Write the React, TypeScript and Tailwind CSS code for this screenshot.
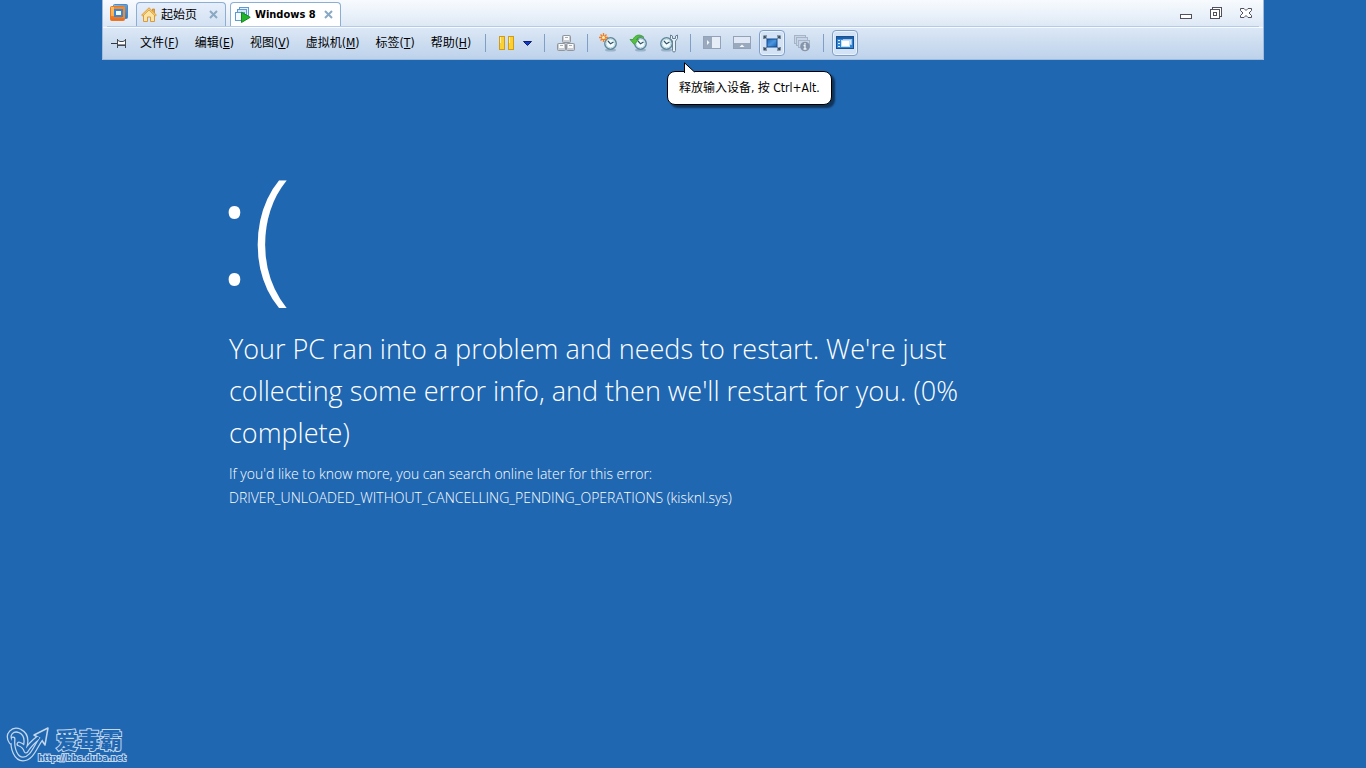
import type { ReactNode } from 'react'

const menus = [
  ['文件', 'F'],
  ['编辑', 'E'],
  ['视图', 'V'],
  ['虚拟机', 'M'],
  ['标签', 'T'],
  ['帮助', 'H'],
] as const

function ToolButton({ label, active, children }: { label: string; active?: boolean; children: ReactNode }) {
  return (
    <button
      type="button"
      aria-label={label}
      className={
        active
          ? 'flex h-[26px] w-[26px] items-center justify-center rounded-sm border border-[#7f9fca] bg-[#d3e2f5] shadow-[inset_0_0_0_1px_#eaf2fb]'
          : 'flex h-[26px] w-[26px] items-center justify-center'
      }
    >
      {children}
    </button>
  )
}

function Separator() {
  return <div className="mx-1 h-[18px] w-px bg-[#7f9fc6]" />
}

function LogoIcon() {
  return (
    <svg width="20" height="20" viewBox="0 0 20 20">
      <defs>
        <linearGradient id="logo-orange" x1="0" y1="0" x2="0" y2="1">
          <stop offset="0" stopColor="#fdb245" />
          <stop offset="1" stopColor="#ec6a1c" />
        </linearGradient>
        <linearGradient id="logo-blue" x1="0" y1="0" x2="1" y2="1">
          <stop offset="0" stopColor="#8fc0ea" />
          <stop offset="1" stopColor="#2f78bf" />
        </linearGradient>
      </defs>
      <rect x="4.500" y="1.500" width="14" height="14" rx="1" fill="url(#logo-blue)" stroke="#4d89c4" />
      <rect x="1.500" y="3.500" width="14" height="14" rx="1" fill="url(#logo-orange)" stroke="#e27a2c" />
      <path d="M5 4h11v11h-3V7H5z" fill="#f58a2a" />
      <rect x="5" y="6" width="9" height="8" fill="#3b86d0" />
      <rect x="7" y="8" width="5" height="4" fill="#f4f9ff" />
      <path d="M2 4h3v9H2z" fill="#ffcb70" opacity=".6" />
    </svg>
  )
}

function HomeIcon() {
  return (
    <svg width="16" height="16" viewBox="0 0 16 16">
      <path d="M11.500 2h2v4h-2z" fill="#e9a93f" stroke="#c07c20" strokeWidth=".7" />
      <path d="M2.500 8v6.500h4V10h3v4.500h4V8L8 2.800z" fill="#fbe3a3" stroke="#d89a3a" />
      <path d="M.8 8.800 8 1.600l7.200 7.200" fill="none" stroke="#e0a23e" strokeWidth="2" />
      <path d="M1.500 8.200 8 1.800l6.500 6.400" fill="none" stroke="#fbd78a" strokeWidth=".9" />
    </svg>
  )
}

function RunningIcon() {
  return (
    <svg width="16" height="16" viewBox="0 0 16 16">
      <rect x="4.500" y=".5" width="9" height="8" fill="#e2f0fb" stroke="#5e9bd2" />
      <rect x="2.500" y="2.500" width="9" height="8" fill="#d2e8fa" stroke="#5e9bd2" />
      <rect x=".5" y="5.500" width="9" height="8" fill="#f4faff" stroke="#5e9bd2" />
      <path d="M6.500 5.200v10.300l8.700-5.200z" fill="#22b52a" stroke="#128a1a" />
    </svg>
  )
}

function CloseIcon() {
  return (
    <svg width="9" height="9" viewBox="0 0 9 9">
      <path d="m1 1 7 7M8 1 1 8" stroke="#8aa9c4" strokeWidth="2" />
    </svg>
  )
}

function PinIcon() {
  return (
    <svg width="18" height="12" viewBox="0 0 18 12">
      <path d="M1 6.500h6" stroke="#33373d" />
      <rect x="8" y="4" width="7" height="4" fill="#fff" />
      <path d="M7.500 2v9M15.500 2v9M8 3.500l2 1h3l2-1M8 8.500h7" fill="none" stroke="#44484f" />
      <path d="M8 7.500h7" stroke="#8d9197" />
    </svg>
  )
}

function KeysIcon() {
  return (
    <svg width="20" height="18" viewBox="0 0 20 18">
      {[[6, 1], [1, 9], [10, 9]].map(([x, y]) => (
        <g key={`${x}-${y}`}>
          <rect x={x + 0.5} y={y + 0.5} width="8" height="7" rx="1" fill="#c9ccd0" stroke="#92969c" />
          <rect x={x + 2} y={y + 1} width="5" height="4" fill="#f9fafa" />
          <path d={`M${x + 3} ${y + 2.5}h3`} stroke="#a9adb2" />
        </g>
      ))}
    </svg>
  )
}

function Clock({ x = 5 }: { x?: number }) {
  return (
    <g transform={`translate(${x} 4)`}>
      <ellipse cx="6.500" cy="13" rx="5.500" ry="1.500" fill="#7d99b4" opacity=".6" />
      <circle cx="6.500" cy="6.500" r="5.700" fill="#f2fafd" stroke="#5f8799" strokeWidth="1.500" />
      <circle cx="6.500" cy="6.500" r="4.300" fill="none" stroke="#b4d8e4" />
      <path d="m4 4 2.500 2.800L9.500 5" fill="none" stroke="#2f5268" strokeWidth="1.200" />
    </g>
  )
}

function TakeSnapshotIcon() {
  return (
    <svg width="20" height="20" viewBox="0 0 20 20">
      <Clock />
      <path d="M4.500 0v9M0 4.500h9M1.500 1.500l6 6M7.500 1.500l-6 6" stroke="#ef7d22" strokeWidth="1.300" />
      <circle cx="4.500" cy="4.500" r="1.500" fill="#fff2b8" />
    </svg>
  )
}

function RevertIcon() {
  return (
    <svg width="20" height="20" viewBox="0 0 20 20">
      <Clock />
      <path
        d="M15 4.500C11.500 .5 6 1.500 4 6.500H1l4.300 5L9.500 6.500H7.500C9 3.800 12 3 15 4.500z"
        fill="#56c140"
        stroke="#2d9128"
        strokeWidth=".7"
      />
    </svg>
  )
}

function ManageIcon() {
  return (
    <svg width="20" height="20" viewBox="0 0 20 20">
      <Clock x={1} />
      <path
        d="M11.500 2v3.500L13.500 8v9.500a1.500 1.500 0 0 0 3 0V8l2-2.500V2l-2 1v2.500h-3V3z"
        fill="#eaf1f6"
        stroke="#668299"
      />
    </svg>
  )
}

function SidebarIcon() {
  return (
    <svg width="18" height="14" viewBox="0 0 18 14">
      <rect x=".5" y=".5" width="17" height="12" fill="#e6edf6" stroke="#93a2b8" />
      <path d="M1 1h8v11H1z" fill="#9aa9be" />
      <path d="M4 4v5l2.500-2.500z" fill="#f3f6fa" />
    </svg>
  )
}

function ThumbnailIcon() {
  return (
    <svg width="18" height="14" viewBox="0 0 18 14">
      <rect x=".5" y=".5" width="17" height="12" fill="#dfe8f4" stroke="#93a2b8" />
      <path d="M1 7h16v5H1z" fill="#9aa9be" />
      <path d="M6.500 11h5L9 8.500z" fill="#f3f6fa" />
    </svg>
  )
}

function FullscreenIcon() {
  return (
    <svg width="18" height="16" viewBox="0 0 18 16" className="shrink-0">
      <defs>
        <linearGradient id="screen" x1="0" y1="0" x2="1" y2="1">
          <stop offset="0" stopColor="#1d62b7" />
          <stop offset=".5" stopColor="#4b97de" />
          <stop offset="1" stopColor="#1a5cad" />
        </linearGradient>
      </defs>
      <rect x="4" y="4" width="10" height="8" fill="url(#screen)" stroke="#164a8d" />
      <path
        d="M1 4V1h3M14 1h3v3M17 12v3h-3M4 15H1v-3M1 1l2.500 2.500M17 1l-2.500 2.500M17 15l-2.500-2.500M1 15l2.500-2.500"
        fill="none"
        stroke="#3e4f63"
        strokeWidth="1.200"
      />
    </svg>
  )
}

function UnityIcon() {
  return (
    <svg width="18" height="18" viewBox="0 0 18 18">
      <g fill="#c8d5e6" stroke="#a5b4c8">
        <rect x="1.500" y="1.500" width="11" height="8" />
        <rect x="3.500" y="3.500" width="11" height="8" />
        <rect x="5.500" y="6.500" width="11" height="7" />
      </g>
      <circle cx="12" cy="12.500" r="4.800" fill="#8595ab" />
      <path d="M12 9v1.500M10.500 11.500H12V15m-1.500 0h3" fill="none" stroke="#edf2f7" strokeWidth="1.300" />
    </svg>
  )
}

function ConsoleIcon() {
  return (
    <svg width="20" height="16" viewBox="0 0 20 16" className="shrink-0">
      <rect x="1.500" y="1.500" width="17" height="12" fill="#2e86d6" stroke="#184f91" />
      <path d="M2 2h16v2H2z" fill="#1e5faa" />
      <path d="M3 5.500h2M3 8.500h2M3 11.500h2" stroke="#dceeff" />
      <rect x="8.500" y="4.500" width="8" height="5" fill="#d5e9fb" stroke="#9cc8ef" />
      <rect x="6.500" y="5.500" width="8" height="6" fill="#fff" stroke="#c8e1f7" />
    </svg>
  )
}

function WindowButtons() {
  return (
    <div className="ml-auto flex items-center gap-1">
      <ToolButton label="最小化">
        <svg width="14" height="14" viewBox="0 0 14 14">
          <rect x="1.500" y="8.500" width="11" height="4" fill="#fff" stroke="#50505f" />
        </svg>
      </ToolButton>
      <ToolButton label="还原">
        <svg width="14" height="14" viewBox="0 0 14 14">
          <rect x="3.500" y="1.500" width="9" height="9" fill="#fff" stroke="#50505f" />
          <rect x="1.500" y="3.500" width="9" height="9" fill="#fff" stroke="#50505f" />
          <rect x="4.500" y="6.500" width="3" height="3" fill="#fff" stroke="#50505f" />
        </svg>
      </ToolButton>
      <ToolButton label="关闭">
        <svg width="14" height="14" viewBox="0 0 14 14">
          <path
            d="M1.500 2.500h3.500l2 2 2-2h3.500v2L10 7l2.500 2.500v2H9l-2-2-2 2H1.500v-2L4 7 1.500 4.500z"
            fill="#fff"
            stroke="#50505f"
          />
        </svg>
      </ToolButton>
    </div>
  )
}

function ReleaseHint() {
  return (
    <div
      role="tooltip"
      className="absolute top-[71px] left-[564px] rounded-lg border border-black bg-white px-[11px] py-2 text-xs leading-4 whitespace-nowrap text-black shadow-[3px_3px_2px_rgba(0,0,0,0.5)]"
    >
      <svg className="absolute -top-[10px] left-4" width="12" height="11" viewBox="0 0 12 11">
        <path d="M.5 11V.8L10.500 10" fill="#fff" stroke="#000" />
        <path d="M1 10h8v1H1z" fill="#fff" />
      </svg>
      释放输入设备, 按 Ctrl+Alt.
    </div>
  )
}

function VmToolbar() {
  return (
    <header className="relative mx-[102px] border-x border-b border-[#9fbcdf] bg-linear-to-b from-[#f8fbfe] to-[#bdd2eb] font-['DejaVu_Sans_Condensed','Open_Sans','Noto_Sans_CJK_SC',sans-serif] text-xs text-black">
      <div className="mx-1 flex h-[27px] items-center border-b border-[#b3cbe8]">
        <div className="flex w-[29px] items-center pl-[2px]">
          <LogoIcon />
        </div>
        <div className="flex items-end gap-1 self-end">
          <div className="flex h-6 w-[90px] items-center rounded-t-sm border border-b-0 border-[#8caed3] bg-linear-to-b from-[#e6eefa] to-[#d3e1f3] pr-[7px] pl-1">
            <HomeIcon />
            <button type="button" className="ml-1">起始页</button>
            <button type="button" aria-label="关闭 起始页" className="ml-auto"><CloseIcon /></button>
          </div>
          <div className="flex h-6 w-[111px] items-center rounded-t-sm border border-b-0 border-[#8caed3] bg-white pr-[7px] pl-1">
            <RunningIcon />
            <button type="button" className="ml-1 pt-0.5 text-[11px] font-bold">Windows 8</button>
            <button type="button" aria-label="关闭 Windows 8" className="ml-auto"><CloseIcon /></button>
          </div>
        </div>
        <WindowButtons />
      </div>

      <div className="flex h-8 items-center gap-1 border-t border-white/80 pb-px pl-[3px]">
        <div className="-mr-0.5 flex items-center">
          <ToolButton label="固定工具栏"><PinIcon /></ToolButton>
          {menus.map(([name, key]) => (
            <button key={key} type="button" className="px-2 whitespace-nowrap">
              {name}(<u>{key}</u>)
            </button>
          ))}
        </div>
        <Separator />
        <button type="button" aria-label="挂起" className="flex h-[26px] w-[42px] items-center gap-2 pl-[5px]">
          <svg width="16" height="16" viewBox="0 0 16 16">
            <rect x=".5" y="1.500" width="5" height="13" fill="#fbd032" stroke="#d09a1c" />
            <rect x="9.500" y="1.500" width="5" height="13" fill="#fbd032" stroke="#d09a1c" />
            <path d="M1.500 2v6M10.500 2v6" stroke="#fff0a8" />
          </svg>
          <svg width="9" height="5" viewBox="0 0 9 5">
            <path d="M.5.5h8l-4 4z" fill="#1238c8" stroke="#0c2173" />
          </svg>
        </button>
        <Separator />
        <ToolButton label="发送 Ctrl+Alt+Del"><KeysIcon /></ToolButton>
        <Separator />
        <ToolButton label="拍摄快照"><TakeSnapshotIcon /></ToolButton>
        <ToolButton label="恢复快照"><RevertIcon /></ToolButton>
        <ToolButton label="管理快照"><ManageIcon /></ToolButton>
        <Separator />
        <ToolButton label="侧栏"><SidebarIcon /></ToolButton>
        <ToolButton label="缩略图栏"><ThumbnailIcon /></ToolButton>
        <ToolButton label="全屏" active><FullscreenIcon /></ToolButton>
        <ToolButton label="Unity"><UnityIcon /></ToolButton>
        <Separator />
        <ToolButton label="控制台视图" active><ConsoleIcon /></ToolButton>
      </div>
      <ReleaseHint />
    </header>
  )
}

function Watermark() {
  return (
    <footer className="mt-auto flex items-end gap-1 pb-1 pl-[6px] text-[#2067b2]">
      <svg width="44" height="38" viewBox="0 0 44 38" fill="none" strokeLinejoin="round" strokeLinecap="round">
        <g stroke="#c3d7ee" strokeWidth="5">
          <path d="M5 16C0 8 7 2 14 5c6 3 7 9 5 16" />
          <path d="M7 13c-1 10 3 20 10 20 9 0 12-12 18-20" />
          <path d="M13 18c3 1 6 4 7 7 3-5 7-9 12-13" />
        </g>
        <path d="m28 9 14-7-3 17-4-6z" fill="#2067b2" stroke="#c3d7ee" strokeWidth="1.500" />
        <g stroke="#2067b2" strokeWidth="2.500">
          <path d="M5 16C0 8 7 2 14 5c6 3 7 9 5 16" />
          <path d="M7 13c-1 10 3 20 10 20 9 0 12-12 18-20" />
          <path d="M13 18c3 1 6 4 7 7 3-5 7-9 12-13" />
        </g>
      </svg>
      <div className="-ml-4 flex flex-col gap-[3px] [-webkit-text-stroke:2px_#c3d7ee] [paint-order:stroke_fill]">
        <span className="pl-[18px] text-[22px] leading-6 font-black">爱毒霸</span>
        <span className="font-['DejaVu_Sans'] text-[8px] leading-[10px] font-bold">http://bbs.duba.net</span>
      </div>
    </footer>
  )
}

export default function App() {
  return (
    <div className="flex min-h-screen flex-col bg-[#2067b2] font-['Open_Sans','Noto_Sans_CJK_SC',sans-serif]">
      <VmToolbar />
      <main className="mt-[69px] ml-[229px] max-w-[760px] text-white">
        <h1 className="-ml-3 text-[146px] leading-[199px] font-light">:(</h1>
        <p className="text-[27px] leading-[42px] font-light">
          Your PC ran into a problem and needs to restart. We're just collecting some error info, and then we'll
          restart for you. (0% complete)
        </p>
        <div className="mt-2 text-sm leading-6 font-light">
          <p>If you'd like to know more, you can search online later for this error:</p>
          <p>DRIVER_UNLOADED_WITHOUT_CANCELLING_PENDING_OPERATIONS (kisknl.sys)</p>
        </div>
      </main>
      <Watermark />
    </div>
  )
}
